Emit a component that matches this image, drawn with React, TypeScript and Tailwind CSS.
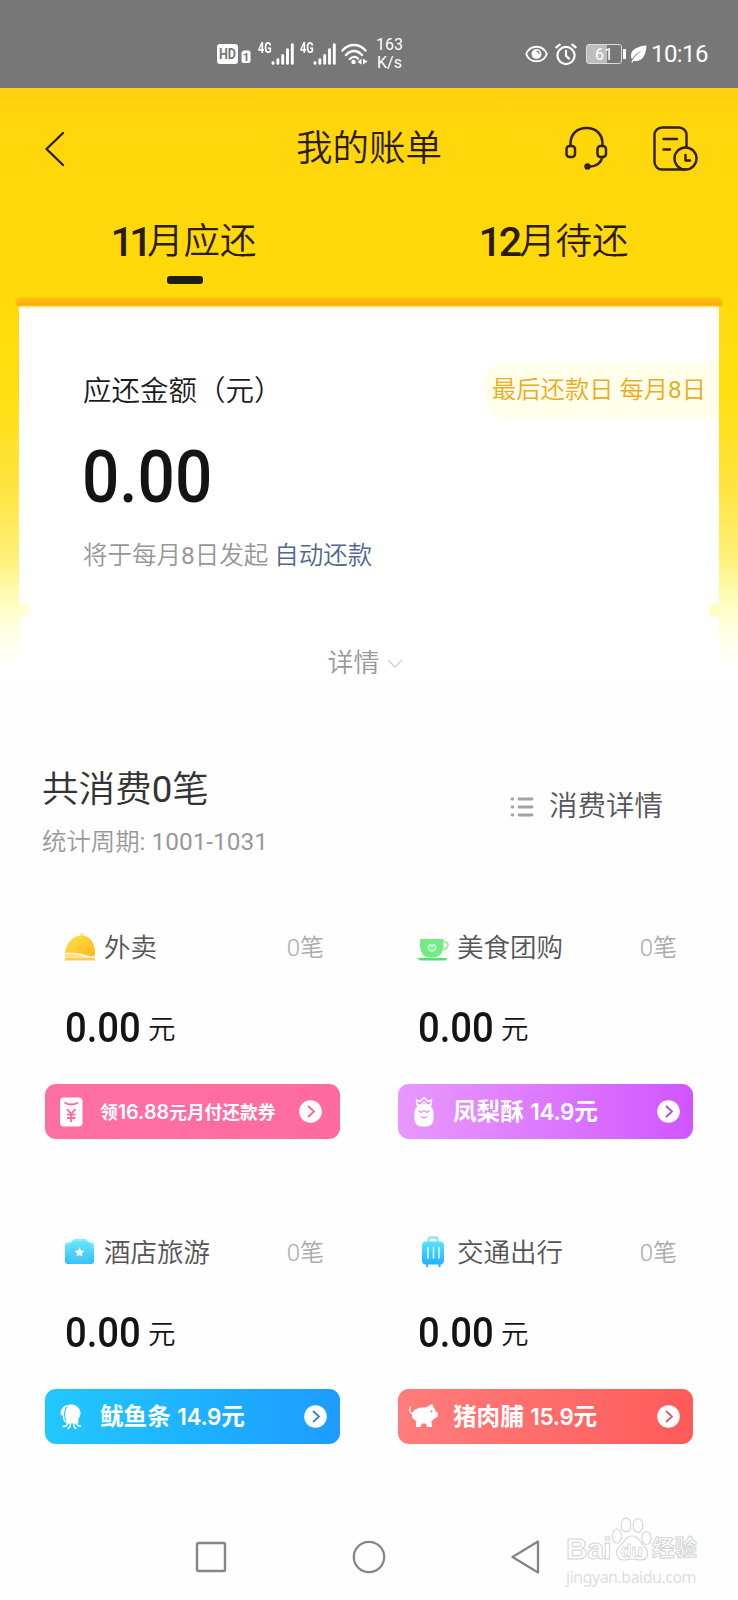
import React from "react";

const CJK = "font-['Roboto','Noto_Sans_CJK_SC',sans-serif]";

function Signal() {
  return (
    <div className="flex items-end">
      <span className="mb-[11px] w-[13px] origin-left scale-x-[.78] text-[14px] font-bold leading-[11px]">4G</span>
      <svg width="23" height="22" viewBox="0 0 23 22" stroke="#fff" strokeWidth="2.9" strokeLinecap="round">
        <path d="M2 20.4v-.8M6.9 20.4v-3.6M11.7 20.4v-8M16.5 20.4V6.6M21.3 20.4V1.6" />
      </svg>
    </div>
  );
}

function StatusBar() {
  return (
    <div className="flex h-[88px] items-center bg-[#777777] pt-[20px] text-white">
      <svg className="ml-[217px]" width="34" height="21" viewBox="0 0 34 21">
        <rect x="0" y="0" width="21" height="20" rx="3" fill="#fff" />
        <text x="10.5" y="15" textAnchor="middle" fontSize="14" fontWeight="700" fill="#777" fontFamily="Roboto" textLength="17" lengthAdjust="spacingAndGlyphs">HD</text>
        <path d="M26.500 6.500h5a2 2 0 0 1 2 2v8.500a2 2 0 0 1-2 2h-5a2 2 0 0 1-2-2v-8.500z" fill="#fff" />
        <text x="29" y="17" textAnchor="middle" fontSize="11.500" fontWeight="700" fill="#777" fontFamily="Roboto">1</text>
      </svg>
      <div className="ml-[7px] flex gap-[6px]">
        <Signal />
        <Signal />
      </div>
      <svg className="ml-[5px]" width="27" height="23" viewBox="0 0 27 23" fill="none" stroke="#fff" strokeWidth="2.400" strokeLinecap="round">
        <path d="M1.500 7.500C8 .2 18 .2 24.500 7.500M5 12c5-5.400 11-5.400 16 0M8.800 16c2.800-2.800 5.800-2.800 8.200-.4" />
        <circle cx="12.500" cy="19" r="2.200" fill="#fff" stroke="none" />
        <path d="M20.500 15.500v6l-4-2.500zM22 15.500v6l4.500-3z" fill="#fff" stroke="none" />
      </svg>
      <div className="ml-[7px] w-[29px] text-center text-[16px] leading-[18px]">
        <div>163</div>
        <div>K/s</div>
      </div>
      <svg className="ml-[121px]" width="23" height="18" viewBox="0 0 23 18" fill="none" stroke="#fff" strokeWidth="2">
        <path d="M1.200 9C5-.8 18-.8 21.800 9 18 18.800 5 18.800 1.200 9z" />
        <circle cx="11.500" cy="9" r="5" fill="#fff" stroke="none" />
        <path d="M11.500 6.200c1.600 0 2.600 1 2.600 2.500" stroke="#777" strokeWidth="1.200" />
      </svg>
      <svg className="ml-[7px]" width="22" height="23" viewBox="0 0 22 23" fill="none" stroke="#fff" strokeWidth="2.200" strokeLinecap="round">
        <circle cx="11" cy="12.500" r="8.600" />
        <path d="M11 7.800v5l3 2.800M1.300 4.400l3.400-2.800M20.700 4.400l-3.400-2.800" />
      </svg>
      <div className="ml-[9px] flex h-[20px] w-[36px] items-center justify-center rounded-[3px] border-[1.5px] border-[#ddd] bg-linear-to-r from-[#bdbdbd] from-60% to-[#777] to-60% pt-[1px] text-[16px] leading-none">61</div>
      <div className="ml-[1px] h-[10px] w-[3px] bg-white" />
      <svg className="ml-[4px]" width="17" height="18" viewBox="0 0 17 18">
        <path d="M16.500.5C9 1 1 4 1 10.500c0 1.500.4 2.800 1 3.600C5 9.500 8 7.500 11.500 5.800 7.500 8.500 4 12 1.200 17.300l1.500.2.900-1.800C11 17.500 16 12 16.500.5z" fill="#fff" />
      </svg>
      <span className="ml-[4px] text-[24px] leading-none tracking-[-0.6px]">10:16</span>
    </div>
  );
}

function Header() {
  return (
    <div className="flex h-[120px] items-center justify-between pr-[40px] pl-[44px]">
      <svg width="22" height="36" viewBox="0 0 22 36" fill="none" stroke="#2b1c04" strokeWidth="2.300" strokeLinecap="round" strokeLinejoin="round">
        <path d="M19 3L2.500 19 19 35" />
      </svg>
      <h1 className="mt-[1px] ml-[230px] text-[36.500px] leading-[50px] font-[350] text-[#2b1c04]">我的账单</h1>
      <div className="ml-auto flex items-center gap-[45px]">
        <svg width="43" height="44" viewBox="0 0 43 44" fill="none" stroke="#33200a" strokeWidth="2.500" strokeLinecap="round">
          <path d="M5.500 20v-2C5.500 8 12 2 21.500 2S37.500 8 37.500 18v2M37.500 31c-1.500 6.500-6 9.500-14 9.800" />
          <rect x="1.500" y="20" width="8.500" height="11" rx="3" />
          <rect x="32.500" y="20" width="8.500" height="11" rx="3" />
          <circle cx="22.500" cy="40.500" r="3.200" fill="#33200a" stroke="none" />
        </svg>
        <svg width="45" height="45" viewBox="0 0 45 45" fill="none" stroke="#33200a" strokeWidth="2.400" strokeLinecap="round" strokeLinejoin="round">
          <path d="M33.500 20.500V9a7.500 7.500 0 0 0-7.500-7.500H9A7.500 7.500 0 0 0 1.500 9v27A7.500 7.500 0 0 0 9 43.500h23" />
          <path d="M10.500 13H24M10.500 23.500h6.500M32.500 29v5.500H37" />
          <circle cx="32.500" cy="32.500" r="11" />
        </svg>
      </div>
    </div>
  );
}

function Tab({ month, label, active }: { month: string; label: string; active?: boolean }) {
  return (
    <div className="flex flex-1 flex-col items-center text-[#2b1c04]">
      <div className="flex h-[68px] items-center text-[36.500px] leading-none">
        <span className={`text-[41px] font-medium ${active ? "-mr-[1px] -ml-[2px] tracking-[-4.500px]" : "tracking-[-3px]"}`}>{month}</span>
        <span className="font-[350]">{label}</span>
      </div>
      {active && <div className="h-[8px] w-[36px] rounded-[3px] bg-[#1d1d14]" />}
    </div>
  );
}

function BillCard() {
  return (
    <div className="relative mx-[19px] h-[374px] bg-white">
      <div className="absolute -top-[9px] -left-[3px] -right-[3px] h-[9px] rounded-t-[4px] bg-linear-to-b from-[#ffc412] to-[#ffa50c] blur-[0.8px]" />
      <div className="absolute top-[298px] left-0 h-[13px] w-[10px] rounded-r-[4px] bg-[#ffffd2] blur-[1px]" />
      <div className="absolute top-[298px] right-0 h-[13px] w-[10px] rounded-l-[4px] bg-[#ffffc0] blur-[1px]" />
      <div className="h-[5px] bg-linear-to-b from-[#fffbd0] to-white" />
      <div className="flex items-center justify-between pt-[50px]">
        <div className="pt-[5px] pl-[64px] text-[28.500px] leading-[40px] font-[350] text-[#1c1c1c]">应还金额（元）</div>
        <div className="flex h-[57px] w-[234px] items-center rounded-l-[22px] bg-[#ffffea] pt-[1px] pl-[7px] text-[24.300px] font-[350] whitespace-nowrap text-[#eeaa1e]">
          <span>最后还款日 每月<span className="font-normal">8</span>日</span>
        </div>
      </div>
      <div className="pt-[28px] pl-[63px]">
        <span className="inline-block origin-left scale-x-[.9] text-[73px] leading-[62px] font-medium text-[#141414]">0.00</span>
      </div>
      <div className="pt-[29px] pl-[64px] text-[24.500px] leading-[36px] font-[350] text-[#979797]">
        将于每月<span className="font-normal">8</span>日发起 <span className="text-[#506694]">自动还款</span>
      </div>
      <div className="mt-[71px] flex items-center justify-center pr-[8px] text-[26px] leading-[36px] font-[350] text-[#999]">
        详情
        <svg className="mt-[2px] ml-[7px]" width="16" height="10" viewBox="0 0 16 10" fill="none" stroke="#d4d4d4" strokeWidth="1.500">
          <path d="M1 1l7 7 7-7" />
        </svg>
      </div>
    </div>
  );
}

function Summary() {
  return (
    <div className="flex h-[104px] items-start justify-between pr-[75px] pl-[42px]">
      <div>
        <div className="mt-[1px] text-[36.600px] leading-[54px] font-[350] text-[#333]">共消费<span className="font-normal">0</span>笔</div>
        <div className="mt-[7px] text-[24.400px] leading-[36px] font-[350] text-[#999]">统计周期<span className="font-normal">: 1001-1031</span></div>
      </div>
      <div className="mt-[25px] flex items-center text-[28.500px] leading-[40px] font-[350] text-[#55555a]">
        <svg className="mr-[15px]" width="24" height="20" viewBox="0 0 24 20" stroke="#a2a2ab" strokeWidth="2.800" strokeLinecap="round">
          <path d="M2 2h.8M9 2h13M2 10h.8M9 10h13M2 18h.8M9 18h13" />
        </svg>
        消费详情
      </div>
    </div>
  );
}

const Dish = (
  <svg width="32" height="32" viewBox="0 0 32 32">
    <defs>
      <linearGradient id="dish" x1="0" y1="0" x2="1" y2="1">
        <stop offset="0" stopColor="#ffe04a" />
        <stop offset="1" stopColor="#ffb81c" />
      </linearGradient>
    </defs>
    <circle cx="18" cy="3.500" r="1.800" fill="#ffe58a" />
    <path d="M1 22C2.500 11 9 4.500 17.500 4.500S31 12 31 21c0 3-.5 4.500-1.500 4.500C22 25 14 20.500 1 22z" fill="url(#dish)" />
    <path d="M1 23c11-1 15 1 21 3.500H1z" fill="#ffe27c" />
    <rect x="1" y="26.800" width="30" height="2.700" rx="1" fill="#ffc95a" />
  </svg>
);

const Cup = (
  <svg width="32" height="32" viewBox="0 0 32 32">
    <path d="M3 8h23.500v5c0 8-3 12.500-9 13.500h-6C5.500 25.500 3 21 3 13z" fill="#74ea84" />
    <path d="M26 11h2.500a2.500 2.500 0 0 1 2.300 2.800C30.500 17 28.500 18.500 25.500 19" fill="none" stroke="#9af2a4" strokeWidth="2" />
    <path d="M.5 27h30c-1 2-2 2.500-4 2.500H5c-2.500 0-3.500-.8-4.500-2.500z" fill="#55df76" />
    <path d="M15 20.500c-3-1.700-3.800-3-3.800-4.600 0-2.200 2.900-2.500 3.800-.8.900-1.700 3.800-1.400 3.800.8 0 1.600-.8 2.900-3.800 4.600z" fill="#84ee94" stroke="#d4fbd8" strokeWidth="1.400" />
  </svg>
);

const Briefcase = (
  <svg width="32" height="32" viewBox="0 0 32 32">
    <defs>
      <linearGradient id="case" x1="0" y1="0" x2="0" y2="1">
        <stop offset="0" stopColor="#72ebff" />
        <stop offset="1" stopColor="#2cb8fb" />
      </linearGradient>
    </defs>
    <path d="M8 5.500A3.500 3.500 0 0 1 11 3h9.500a3.500 3.500 0 0 1 3.500 2.500V7H8z" fill="#7eecff" />
    <rect x="1" y="6.500" width="29" height="21.500" rx="3" fill="url(#case)" />
    <rect x="6" y="5.500" width="20" height="22.500" rx="2" fill="#4dd2ff" opacity=".45" />
    <path d="M15.500 11.500l1.500 3 3.400.4-2.500 2.300.7 3.300-3.100-1.600-3.100 1.600.7-3.300-2.500-2.300 3.400-.4z" fill="#fff" />
  </svg>
);

const Suitcase = (
  <svg width="32" height="32" viewBox="0 0 32 32">
    <defs>
      <linearGradient id="suit" x1="0" y1="0" x2="0" y2="1">
        <stop offset="0" stopColor="#58e4fb" />
        <stop offset="1" stopColor="#22b2fc" />
      </linearGradient>
    </defs>
    <path d="M11.500 6V3.500A2 2 0 0 1 13.500 1.500h5a2 2 0 0 1 2 2V6" fill="none" stroke="#6fe6f6" strokeWidth="1.800" />
    <rect x="5" y="5.500" width="22" height="23" rx="4" fill="url(#suit)" />
    <path d="M10 28v2M22.500 28v2" stroke="#32b8fb" strokeWidth="2.400" strokeLinecap="round" />
    <path d="M11 11.500v10.500M16.500 11.500v10.500M22 11.500v10.500" stroke="#c8f6ff" strokeWidth="1.700" strokeLinecap="round" />
  </svg>
);

const Coupon = (
  <svg width="32" height="32" viewBox="0 0 32 32">
    <rect x="5" y="1.500" width="22.500" height="29" rx="4" fill="#fff" />
    <path d="M9.500 6.500c4 2.400 9.500 2.400 13.500 0M12 13l4.200 5 4.200-5M16.200 17.500V26M12 18.600h8.400M12 22h8.400" fill="none" stroke="#ff6a9e" strokeWidth="1.900" />
  </svg>
);

const Pineapple = (
  <svg width="32" height="32" viewBox="0 0 32 32">
    <path d="M9 9L8.500 4l3.500 1.500L16 1.500 20 5.500 23.500 4 23 9z" fill="none" stroke="#fff" strokeWidth="1.600" strokeLinejoin="round" />
    <path d="M13 9l3-3 3 3" fill="none" stroke="#fff" strokeWidth="1.400" />
    <rect x="6.500" y="9" width="19" height="21.500" rx="7" fill="#fff" />
    <path d="M10.500 14.500l2.500 2 3-2 3 2 2.500-2M12.500 20.500l3.500 1.500 3.500-1.500" fill="none" stroke="#df95fb" strokeWidth="1.200" />
  </svg>
);

const Squid = (
  <svg width="32" height="32" viewBox="0 0 32 32">
    <path d="M9.500 9C10 5.500 13 3.500 16.500 3.500c5 0 9 4.200 9 8.500 0 3-1 4.500-2.200 6v4.500H11v-4C9 16 9 12.500 9.500 9z" fill="#fff" />
    <path d="M12.500 4C8 5 6.500 7.500 6.800 10c.2 3 .7 5 2 7C9.200 13 10 8 12.500 4z" fill="#fff" />
    <path d="M12 5.500C9.300 9 9.300 13 10 18" stroke="#23bdfe" strokeWidth="1.100" fill="none" />
    <path d="M9 7.500C7 8.500 6 11 6.500 13.500M8.500 15c0 2.500.5 4 1.500 5.500M12.500 22c0 2.500-2 3.500-4.500 3.500M15.500 22c0 3.500-.5 5-2.500 5.500M19 22c0 3.500 0 5 2 5.500M21.500 21c0 3 1.500 4.500 4 4" fill="none" stroke="#fff" strokeWidth="1.500" strokeLinecap="round" />
  </svg>
);

const Pig = (
  <svg width="32" height="32" viewBox="0 0 32 32">
    <path d="M4 13C5.500 8 10.500 6.300 18 6.500l4-2.500 2.500-1 .8 3.500c2 1 2 3 2.500 4.500l2.200.5-.6 4.500c-2.500.8-3.700 2.700-6 4.200l.6 5.800H19L18 22.500h-4L12.500 26H8v-6c-3-2-4.500-3.500-4-7z" fill="#fff" />
    <path d="M5 12.500C1.800 12.500.8 9 2.300 6" fill="none" stroke="#fff" strokeWidth="1.400" strokeLinecap="round" />
    <circle cx="23.500" cy="10.500" r="1" fill="#ff6e6c" />
  </svg>
);

type Category = {
  name: string;
  icon: React.ReactNode;
  promoIcon: React.ReactNode;
  promo: React.ReactNode;
  bg: string;
  arrow: string;
  pad: string;
};

const mid = "text-[23.600px] font-bold";
const num = "font-['Inter'] text-[22.500px] font-semibold tracking-[-0.3px]";

const categories: Category[] = [
  {
    name: "外卖", icon: Dish, promoIcon: Coupon, arrow: "#f0679a", pad: "pr-[18px]",
    bg: "bg-linear-to-r from-[#ff70a2] to-[#ff6b9f]",
    promo: <span className="text-[17.700px] font-bold">领<span className="font-['Inter'] text-[19.800px] font-semibold">16.88</span>元月付还款券</span>,
  },
  {
    name: "美食团购", icon: Cup, promoIcon: Pineapple, arrow: "#a04fd0", pad: "pr-[13px]",
    bg: "bg-linear-to-r from-[#e998fd] to-[#d154ff]",
    promo: <span className={mid}>凤梨酥 <span className={num}>14.9</span>元</span>,
  },
  {
    name: "酒店旅游", icon: Briefcase, promoIcon: Squid, arrow: "#3483c0", pad: "pr-[13px]",
    bg: "bg-linear-to-r from-[#23c8ff] to-[#1e9bff]",
    promo: <span className={mid}>鱿鱼条 <span className={num}>14.9</span>元</span>,
  },
  {
    name: "交通出行", icon: Suitcase, promoIcon: Pig, arrow: "#d85472", pad: "pr-[13px]",
    bg: "bg-linear-to-r from-[#ff7d7c] to-[#ff5a5a]",
    promo: <span className={mid}>猪肉脯 <span className={num}>15.9</span>元</span>,
  },
];

function CategoryCard({ c }: { c: Category }) {
  return (
    <div className="flex h-[305px] flex-col">
      <div className="flex h-[40px] items-center pr-[16px] pl-[19px]">
        {c.icon}
        <span className="mt-[2px] ml-[8px] text-[26.500px] leading-[40px] font-[350] text-[#555]">{c.name}</span>
        <span className="mt-[2px] ml-auto text-[24px] leading-[40px] font-[350] text-[#aaa]">0笔</span>
      </div>
      <div className="mt-[35px] flex h-[50px] items-center pl-[20px] text-[#141414]">
        <span className="mt-[1px] w-[76px] origin-left scale-x-[.9] text-[42.500px] leading-[50px] font-medium">0.00</span>
        <span className="mt-[6px] ml-[7px] text-[27.500px] leading-[40px] font-[350]">元</span>
      </div>
      <div className={`mt-[32px] flex h-[55px] items-center rounded-[11px] pl-[10px] text-white ${c.bg} ${c.pad}`}>
        {c.promoIcon}
        <div className="mt-[3px] ml-[13px] flex-1 font-['Liberation_Sans','Noto_Sans_CJK_SC',sans-serif] leading-[40px] whitespace-nowrap">{c.promo}</div>
        <svg width="23" height="23" viewBox="0 0 23 23">
          <circle cx="11.500" cy="11.500" r="11.300" fill="#fff" />
          <path d="M9 6l6 5.500L9 17" fill="none" stroke={c.arrow} strokeWidth="1.700" />
        </svg>
      </div>
    </div>
  );
}

function Watermark() {
  return (
    <div className="w-[134px] text-white">
      <div className="flex h-[48px] items-end font-['Liberation_Sans','Noto_Sans_CJK_SC',sans-serif] font-bold [-webkit-text-stroke:1px_#d4d4d4]">
        <span className="w-[46px] text-[30px] leading-[34px] tracking-[-0.5px]">Bai</span>
        <svg className="mb-[3px]" width="40" height="46" viewBox="0 0 40 46" fill="#fff" stroke="#d8d8d8" strokeWidth="1.200">
          <ellipse cx="5" cy="19" rx="4.600" ry="7" />
          <ellipse cx="14" cy="8" rx="4.800" ry="6.800" />
          <ellipse cx="26" cy="8.500" rx="4.800" ry="6.800" />
          <ellipse cx="34.500" cy="21" rx="4.600" ry="6.500" />
          <path d="M20 19c-7 0-7 6-12 10-6 5-4 14 4 14 4 0 5-1 8-1s5 1 9 1c7 0 9-8 3-14-5-4-5-10-12-10z" />
          <text x="19.500" y="39.500" textAnchor="middle" fontSize="18" fontFamily="Liberation Sans" fontWeight="700" strokeWidth=".8">du</text>
        </svg>
        <span className="text-[22.500px] leading-[34px] whitespace-nowrap">经验</span>
      </div>
      <div className="font-['Noto_Sans',sans-serif] text-[16px] leading-[22px] tracking-[-0.5px] text-[#dedede]">jingyan.baidu.com</div>
    </div>
  );
}

function NavBar() {
  return (
    <div className="flex h-[86px] items-center">
      <svg className="ml-[195px]" width="32" height="32" viewBox="0 0 32 32" fill="none" stroke="#868686" strokeWidth="2.400">
        <rect x="2" y="2" width="28" height="28" rx="1.500" />
      </svg>
      <svg className="ml-[125px]" width="34" height="34" viewBox="0 0 34 34" fill="none" stroke="#868686" strokeWidth="2.300">
        <circle cx="17" cy="17" r="15.200" />
      </svg>
      <svg className="ml-[124px]" width="30" height="36" viewBox="0 0 30 36" fill="none" stroke="#868686" strokeWidth="2.300" strokeLinejoin="round">
        <path d="M2.500 18L28 2.500v31z" />
      </svg>
      <div className="-mt-[9px] ml-[26px]">
        <Watermark />
      </div>
    </div>
  );
}

export default function App() {
  return (
    <div className={`h-[1600px] w-[738px] overflow-hidden bg-[#fefefe] ${CJK}`}>
      <StatusBar />
      <div className="h-[592px] bg-[linear-gradient(to_bottom,#ffd00e_0px,#ffd60b_30px,#ffda0a_200px,#ffdf12_310px,#ffe540_400px,#fff078_470px,#ffffc8_520px,#ffffee_555px,#ffffff_580px)]">
        <Header />
        <div className="flex h-[98px]">
          <Tab month="11" label="月应还" active />
          <Tab month="12" label="月待还" />
        </div>
        <BillCard />
      </div>
      <div className="h-[82px]" />
      <Summary />
      <div className="mt-[61px] grid grid-cols-2 gap-x-[58px] px-[45px]">
        {categories.map((c) => (
          <CategoryCard key={c.name} c={c} />
        ))}
      </div>
      <div className="-mt-[23px]">
        <NavBar />
      </div>
    </div>
  );
}
